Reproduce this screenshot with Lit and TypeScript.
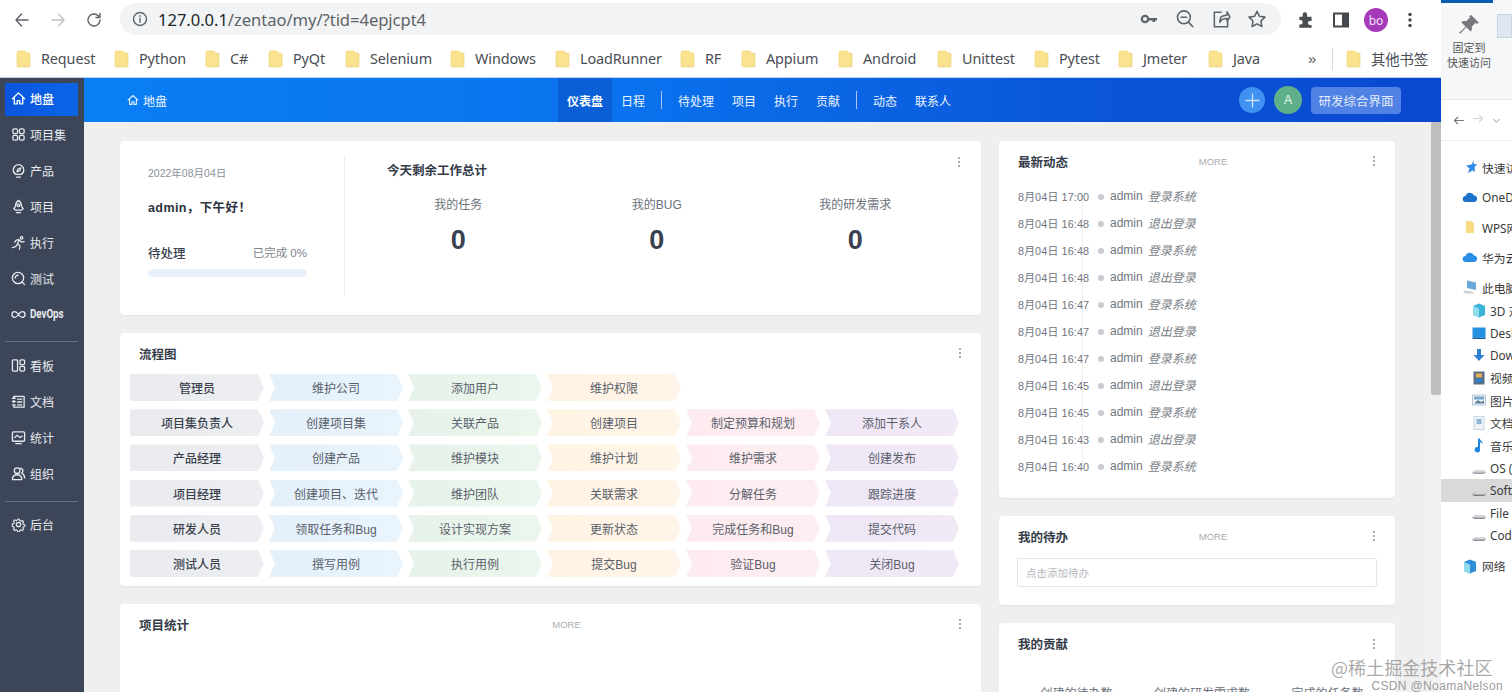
import { LitElement, html, css, svg } from "lit";
import { customElement } from "lit/decorators.js";

const S = (body: unknown, size = 16, box = 16) => html`<svg width=${size} height=${size} viewBox="0 0 ${box} ${box}" fill="none" stroke="currentColor" stroke-width="1.4" stroke-linecap="round" stroke-linejoin="round">${body}</svg>`;

const icons: Record<string, unknown> = {
  home: svg`<path d="M1.5 8.2 8 2l6.5 6.2M3.5 7v6.8h3.2v-3.6h2.6v3.6h3.2V7"/>`,
  grid: svg`<rect x="2" y="2" width="5" height="5" rx="1.4"/><rect x="9" y="2" width="5" height="5" rx="1.4"/><rect x="2" y="9" width="5" height="5" rx="1.4"/><rect x="9" y="9" width="5" height="5" rx="1.4"/>`,
  product: svg`<path d="M5.4 12.2C3.4 11.2 2.4 9.3 2.4 7.4a5.6 5.6 0 0 1 11.2 0c0 1.9-1 3.8-3 4.8z"/><path d="M6 15h4M6.4 9.4l1-3 3-1.2-1 3z"/>`,
  project: svg`<path d="M8 1.5c2.4 1.6 3.2 4 3.2 6.3l1.8 2.4-1.6 1.6H4.6L3 10.2l1.8-2.4C4.8 5.500 5.600 3.100 8 1.500z"/><circle cx="8" cy="6.700" r="1.300"/><path d="M5.800 14.500h4.400"/>`,
  run: svg`<circle cx="11.300" cy="3" r="1.300"/><path d="M1.500 13.500 5 12.500l2-3 2.500 2 -.5 3.500M7 9.500l1.500-4.500-3 .5L4 7.500M8.500 5l2.500 2.500 3-.5"/>`,
  test: svg`<circle cx="7.500" cy="7.500" r="6"/><path d="M4.500 7.500a3 3 0 0 1 3-3M11.800 11.800l2.700 2.700"/>`,
  devops: svg`<path d="M8 8C6.500 5.800 5.500 5 4 5a3 3 0 0 0 0 6c1.500 0 2.500-.8 4-3s2.500-3 4-3a3 3 0 0 1 0 6c-1.500 0-2.500-.8-4-3z"/>`,
  kanban: svg`<rect x="1.500" y="2" width="5.500" height="12" rx="1"/><rect x="9.500" y="2" width="5" height="5" rx="1.200"/><rect x="9.500" y="9" width="5" height="5" rx="1.200"/>`,
  doc: svg`<path d="M3 4V2.500h11v11.500H3v-2M3 7v2"/><path d="M1.500 4.500H4.500M1.500 8H4.500M1.500 11.500H4.500M7 5.500h4.500M7 8.500h4.500M7 11.500h4.500"/>`,
  stat: svg`<rect x="1.500" y="2" width="13" height="10" rx="1.200"/><path d="M4 8l2.500-2.500 3 2.500 2.500-1.500M5 14.500h6"/>`,
  org: svg`<circle cx="6.500" cy="5" r="3"/><path d="M1.500 14.500c0-3.200 2-5.200 5-5.200s5 2 5 5.200zM10 2.200c1.800.3 2.700 1.500 2.700 2.900 0 1.100-.5 2-1.400 2.600 1.800.8 3.200 2.500 3.200 5"/>`,
  gear: svg`<circle cx="8" cy="8" r="2.300"/><path d="M6.800 1.500h2.400l.4 1.900 1.400.6 1.700-1 1.600 1.600-1 1.700.6 1.400 1.900.4v2.400l-1.900.4-.6 1.400 1 1.700-1.600 1.600-1.700-1-1.400.6-.4 1.900H6.800l-.4-1.900-1.400-.6-1.700 1-1.600-1.600 1-1.700-.6-1.400-1.900-.4V7.300l1.900-.4.600-1.400-1-1.700 1.600-1.600 1.700 1 1.400-.6z" transform="translate(1.120 1.120) scale(.86)"/>`,
};

const side1 = [
  ["home", "地盘"], ["grid", "项目集"], ["product", "产品"], ["project", "项目"], ["run", "执行"], ["test", "测试"], ["devops", "DevOps"],
];
const side2 = [["kanban", "看板"], ["doc", "文档"], ["stat", "统计"], ["org", "组织"]];

const marks: [string, number][] = [
  ["Request", 98], ["Python", 91], ["C#", 63], ["PyQt", 77], ["Selenium", 105], ["Windows", 105], ["LoadRunner", 125],
  ["RF", 61], ["Appium", 97], ["Android", 99], ["Unittest", 97], ["Pytest", 84], ["Jmeter", 90], ["Java", 100],
];

const flow = [
  ["管理员", "维护公司", "添加用户", "维护权限"],
  ["项目集负责人", "创建项目集", "关联产品", "创建项目", "制定预算和规划", "添加干系人"],
  ["产品经理", "创建产品", "维护模块", "维护计划", "维护需求", "创建发布"],
  ["项目经理", "创建项目、迭代", "维护团队", "关联需求", "分解任务", "跟踪进度"],
  ["研发人员", "领取任务和Bug", "设计实现方案", "更新状态", "完成任务和Bug", "提交代码"],
  ["测试人员", "撰写用例", "执行用例", "提交Bug", "验证Bug", "关闭Bug"],
];

const acts = [
  ["8月04日 17:00", "登录系统"], ["8月04日 16:48", "退出登录"], ["8月04日 16:48", "登录系统"], ["8月04日 16:48", "退出登录"],
  ["8月04日 16:47", "登录系统"], ["8月04日 16:47", "退出登录"], ["8月04日 16:47", "登录系统"], ["8月04日 16:45", "退出登录"],
  ["8月04日 16:45", "登录系统"], ["8月04日 16:43", "退出登录"], ["8月04日 16:40", "登录系统"],
];

const tree1: [string, string, string][] = [
  ["star", "#2f8fe6", "快速访问"], ["cloud", "#1a73c8", "OneDrive"], ["folder", "#f8dc84", "WPS网盘"], ["cloud", "#2a8ee8", "华为云盘"], ["pc", "#6aa6d6", "此电脑"],
];
const tree2: [string, string, string, boolean?][] = [
  ["cube", "#3cb4d8", "3D 对象"], ["screen", "#2490e0", "Desktop"], ["down", "#2f7fd0", "Downloads"], ["film", "#5b6f86", "视频"],
  ["pic", "#7fa8c8", "图片"], ["page", "#c5d5e2", "文档"], ["note", "#1f86e0", "音乐"], ["drive", "#9aa3ab", "OS (C:)"],
  ["drive", "#7b7f85", "Software (D:)", true], ["drive", "#8b8f95", "File (E:)"], ["drive", "#8b8f95", "Code (F:)"],
];

const treeIcon = (k: string, c: string) => {
  const shapes: Record<string, unknown> = {
    star: svg`<path d="M12 1 9.500 5.500 4 6.500l3.500 3L6 14l4.500-2.500L13 13l-.5-4.500L15 5l-3.500 0z" fill=${c}/>`,
    cloud: svg`<path d="M4 13a3 3 0 0 1-.5-6 4.500 4.500 0 0 1 8.500-.5A3.300 3.300 0 0 1 12.500 13z" fill=${c}/>`,
    folder: svg`<path d="M4 2h5l3 2v10H4z" fill=${c}/>`,
    pc: svg`<path d="M5 1.500 14 3.500V11L5 9z" fill=${c}/><path d="M1 11.500 10 12.500 13 14.500H3z" fill="#c9ced3"/>`,
    cube: svg`<path d="M8 1.500 14 4v9l-6 2.500L2 13V4z" fill=${c}/><path d="M2 4l6 2.500V15.500L2 13z" fill="#8fdcec"/>`,
    screen: svg`<rect x="1.500" y="2.500" width="13" height="10" fill=${c}/><rect x="1.500" y="12.500" width="13" height="1.500" fill="#0f5ea8"/>`,
    down: svg`<path d="M6 2h4v6h3.500L8 14 2.500 8H6z" fill=${c}/>`,
    film: svg`<rect x="2.500" y="1.500" width="11" height="13" fill=${c}/><rect x="5" y="3.500" width="6" height="4" fill="#e8b04c"/><rect x="5" y="8.500" width="6" height="4" fill="#2d7fc9"/>`,
    pic: svg`<rect x="1.500" y="3" width="13" height="10" fill="#eef3f7" stroke="#9fb3c2" stroke-width=".7"/><path d="M3 11.500 7 8l3 2 3-1.500v3z" fill="#5f7f96"/><rect x="3" y="4.500" width="10" height="3" fill=${c}/>`,
    page: svg`<rect x="3" y="1.500" width="10" height="13" fill="#eef2f6" stroke=${c}/><rect x="5.500" y="4" width="5" height="5" fill="#8fb8d8"/>`,
    note: svg`<path d="M7 1.500h1.800c.2 2 2.700 3 3.200 5.500-1-1-2-1.600-3-1.800V12.500a2.700 2.700 0 1 1-2-2.400z" fill=${c}/>`,
    drive: svg`<path d="M1 12.500 5 10h8l2 2.500-2 1.500H3z" fill=${c}/><path d="M5 10h8l2 2.500H1z" fill="#d5d8db"/>`,
  };
  return html`<svg class="ti" width="16" height="16" viewBox="0 0 16 16">${shapes[k]}</svg>`;
};

@customElement("app-root")
export class AppRoot extends LitElement {
  static styles = css`
    :host { display: block; width: 1512px; height: 697px; overflow: hidden; background: #fff;
      font-family: "Liberation Sans", "Noto Sans CJK SC", sans-serif; color: #3c4452; }
    * { box-sizing: border-box; }
    .root { display: flex; height: 697px; }
    .left { width: 1441px; display: flex; flex-direction: column; flex: none; }

    .toolbar { height: 40px; display: flex; align-items: center; color: #5f6368; position: relative; }
    .nav-btn { width: 36px; display: flex; justify-content: center; flex: none; }
    .nav-btns { display: flex; padding-left: 4px; width: 120px; }
    .omni { width: 1161px; height: 32px; margin-top: -2px; border-radius: 16px; background: #f1f3f4; display: flex; align-items: center; padding-left: 12px; flex: none; }
    .url { font: 16.6px "Noto Sans", sans-serif; color: #5f6368; margin-left: 10px; letter-spacing: -.05px; }
    .url b { font-weight: 400; color: #23262b; }
    .omni-right { margin-left: auto; display: flex; gap: 16px; padding-right: 14px; align-items: center; }
    .tools { display: flex; align-items: center; gap: 16px; padding-left: 15px; }
    .avatar { width: 24px; height: 24px; border-radius: 50%; background: #a63ab8; color: #f3e3f5; font: 12px "Noto Sans", sans-serif; display: flex; align-items: center; justify-content: center; margin: 0 -2px; }

    .marks { height: 37px; display: flex; align-items: center; padding-left: 16px; flex: none; }
    .mark { display: flex; align-items: center; gap: 10px; font: 14.4px "Noto Sans", "Noto Sans CJK SC", sans-serif; color: #4a4e54; flex: none; white-space: nowrap; letter-spacing: -.1px; }
    .more { color: #555; font-size: 15px; width: 16px; margin-left: 0; }
    .msep { width: 1px; height: 22px; background: #d8dadd; margin: 0 13px 0 8px; }

    .zen { height: 615px; display: flex; border-top: 1px solid #b8d3f0; overflow: hidden; flex: none; }
    .side { width: 84px; background: #3d4658; flex: none; padding: 5px 6px 0 5px; display: flex; flex-direction: column; }
    .s-item { height: 33px; margin-bottom: 3px; display: flex; align-items: center; gap: 4px; padding: 0 0 3px 6px; color: #e6e9ee; font-size: 12px; flex: none; }
    .s-item.on { background: linear-gradient(90deg, #0b55dc, #0a66e6); color: #fff; font-weight: 500; }
    .s-item.dev span { font: bold 12px "Roboto", sans-serif; transform: scaleX(.82); transform-origin: left; letter-spacing: -.1px; }
    .s-div { height: 1px; background: #667082; flex: none; }
    .d1 { margin: 6px 0 8px; } .d2 { margin: 7px 0 7px; }

    .body { flex: 1; display: flex; flex-direction: column; min-width: 0; position: relative; }
    .head { height: 44px; flex: none; background: linear-gradient(90deg, #0a7ff5, #0a72ee 40%, #0a55d8 75%, #0a48cf); color: #eef4ff; display: flex; align-items: stretch; font-size: 12px; }
    .crumb { width: 474px; padding-left: 43px; display: flex; align-items: center; gap: 4px; flex: none; }
    .hnav { display: flex; align-items: center; }
    .hnav a { height: 44px; display: flex; align-items: center; padding: 0 9px; white-space: nowrap; }
    .hnav a.on { background: #0a5fd6; font-weight: 700; color: #fff; }
    .hsep { width: 1px; height: 18px; background: #a8c6f2; margin: 0 7px; }
    .hright { margin-left: auto; display: flex; align-items: center; padding-right: 40px; gap: 9px; }
    .plus { width: 26px; height: 26px; border-radius: 50%; background: #3f92f2; color: #cfe2fb; display: flex; align-items: center; justify-content: center; }
    .ava { width: 28px; height: 28px; border-radius: 50%; background: #5fb08a; color: #eaf6f0; display: flex; align-items: center; justify-content: center; font-size: 12px; }
    .wbtn { width: 90px; height: 27px; border-radius: 4px; background: #4f82e4; color: #e3ecfb; display: flex; align-items: center; justify-content: center; font-size: 12.5px; margin-left: 0; }

    .main { flex: 1; display: flex; min-height: 0; overflow: hidden; background: #efefef; }
    .content { flex: 1; display: grid; grid-template-columns: 861px 396px; column-gap: 18px; padding: 19px 0 0 36px; overflow: hidden; align-items: start; }
    .col { display: flex; flex-direction: column; gap: 18px; min-width: 0; }
    .scroll { width: 10px; flex: none; background: #f1f1f1; }
    .thumb { height: 273px; background: #bfbfbf; border-radius: 0 0 2px 2px; }

    .card { background: #fff; border-radius: 4px; box-shadow: 0 1px 2px rgba(0,0,0,.06); position: relative; flex: none; }
    .dots { display: flex; flex-direction: column; gap: 2px; width: 2px; }
    .dots i { width: 2px; height: 2px; border-radius: 50%; background: #8e939b; display: block; }
    .c-head { display: flex; align-items: center; height: 40px; padding: 0 20px 0 19px; }
    .c-title { font-size: 12.5px; font-weight: 700; color: #353c49; }
    .more-t { margin-left: auto; font-size: 9.5px; color: #a9adb3; margin-right: 15px; }
    .c-head .dots:last-child { margin-left: auto; }
    .more-t + .dots { margin-left: 0; }

    .today { height: 174px; display: flex; padding: 15px 0 19px; }
    .t-left { width: 225px; border-right: 1px solid #eceef1; padding: 11px 37px 0 28px; flex: none; }
    .t-date { font-size: 10.5px; color: #8b9099; line-height: 13px; }
    .t-hello { font-size: 12.5px; font-weight: 700; color: #2d3440; margin-top: 20px; line-height: 16px; letter-spacing: .4px; }
    .t-row { display: flex; justify-content: space-between; align-items: center; margin-top: 27px; height: 18px; }
    .t-row b { font-weight: 500; font-size: 12.5px; color: #3a414e; }
    .t-row span { font-size: 11.5px; color: #7e838c; }
    .bar { height: 8px; border-radius: 4px; background: #e9f1fb; margin-top: 8px; }
    .t-right { flex: 1; padding: 6px 0 0 42px; position: relative; }
    .t-title { font-size: 12.5px; font-weight: 700; color: #353c49; line-height: 18px; }
    .stats { display: grid; grid-template-columns: repeat(3, 198.500px); margin: 17px 0 0 -28px; text-align: center; }
    .s-l { font-size: 12px; color: #6b717b; line-height: 16px; }
    .s-n { font-size: 27px; font-weight: 700; color: #3a4252; line-height: 32px; margin-top: 11px; }
    .abs-dots { position: absolute; top: 16px; right: 21px; }

    .flow { height: 253px; }
    .rows { padding: 1px 0 0 10px; display: grid; grid-template-columns: repeat(6, 134px); column-gap: 5px; row-gap: 8.200px; }
    .chev { height: 27px; display: flex; align-items: center; justify-content: center; font-size: 12px; color: #59606b;
      clip-path: polygon(0 0, calc(100% - 6px) 0, 100% 50%, calc(100% - 6px) 100%, 0 100%, 6px 50%); }
    .c0 { background: linear-gradient(90deg, #e9ebee, #eceef1); color: #3a414d; font-weight: 500; clip-path: polygon(0 0, calc(100% - 6px) 0, 100% 50%, calc(100% - 6px) 100%, 0 100%); border-radius: 2px 0 0 2px; }
    .c1 { background: linear-gradient(90deg, #e4f0fa, #e9f4fc); }
    .c2 { background: linear-gradient(90deg, #e7f3ea, #ebf6ed); }
    .c3 { background: linear-gradient(90deg, #fff3e3, #fff5e8); }
    .c4 { background: linear-gradient(90deg, #fdebef, #feeef1); }
    .c5 { background: linear-gradient(90deg, #efe7f5, #f2e9f7); }

    .stat-card { height: 200px; }
    .stat-card .c-head, .todo .c-head { }
    .acts { height: 357px; }
    .a-list { padding: 1px 0 0 19px; position: relative; }
    .a-row { display: flex; align-items: center; height: 27px; font-size: 12px; color: #6f757e; position: relative; }
    .a-t { width: 76px; font-size: 10.8px; flex: none; letter-spacing: .15px; white-space: nowrap; padding-top: 1px; }
    .a-dot { width: 6px; height: 6px; border-radius: 50%; background: #c9ccd1; flex: none; margin: 2px 6px 0 4px; position: relative; }
    .a-line { position: absolute; left: 83px; top: 14px; width: 1px; height: 270px; background: #eceef0; }
    .a-u { margin-right: 5px; }
    .a-a { font-style: italic; color: #7a7f88; }

    .todo { height: 89px; }
    .todo input { display: block; width: 360px; height: 29px; margin: 2px 0 0 18px; border: 1px solid #e3e5e8; border-radius: 2px; padding: 0 8px; font: 10.500px "Liberation Sans", "Noto Sans CJK SC", sans-serif; background: #fff; }
    .todo input::placeholder { color: #b4b8be; }
    .contrib { height: 120px; }
    .contrib-h { padding-top: 1px; }
    .c-cols { position: absolute; left: 0; right: 0; top: 61px; display: grid; grid-template-columns: 139px 112px 139px; font-size: 12px; color: #6b717b; text-align: center; padding-left: 8px; }

    .white { flex: 1; background: #fff; }

    .ex { width: 71px; flex: none; overflow: hidden; background: #fff; display: flex; flex-direction: column; border-left: 0; }
    .ribbon { height: 100px; flex: none; background: #f6f7f9; border-bottom: 1px solid #e4e5e7; position: relative; padding-top: 14px; display: flex; }
    .strip { position: absolute; left: 0; top: 0; height: 3px; width: 52px; background: #0b5cad; }
    .pin { width: 56px; flex: none; display: flex; flex-direction: column; align-items: center; font-size: 11px; line-height: 15px; color: #555; text-align: center; }
    .pin svg { margin-bottom: 5px; }
    .copy { width: 15px; height: 24px; background: #dfe8f2; border: 1px solid #c7d4e2; flex: none; }
    .ex-nav { height: 41px; flex: none; border-bottom: 1px solid #eceded; display: flex; align-items: center; gap: 7px; padding-left: 11px; color: #777; }
    .ex-nav .dim { color: #d4d4d4; }
    .tree { padding-top: 11px; font: 11.800px "Noto Sans", "Noto Sans CJK SC", sans-serif; color: #3a3a3a; }
    .t1 { height: 30px; display: flex; align-items: center; gap: 4px; padding-left: 21px; white-space: nowrap; }
    .subs { margin-top: -3px; }
    .t2 { height: 22.500px; display: flex; align-items: center; gap: 3px; padding-left: 30px; white-space: nowrap; }
    .t2.sel { background: #d9d9d9; }
    .last { margin-top: 4px; }
    .ti { flex: none; }

    .wm { position: absolute; left: 1331px; top: 655px; pointer-events: none; text-align: right; width: 172px; color: rgba(130,130,130,.8); }
    .wm1 { font: 18px/24px "Noto Sans CJK SC", sans-serif; letter-spacing: .05px; text-align: left; color: rgba(140,140,140,.75); }
    .wm2 { font: 12px/15px "Liberation Sans", sans-serif; letter-spacing: .35px; }
  `;

  private dots() { return html`<span class="dots"><i></i><i></i><i></i></span>`; }

  private folder() {
    return html`<svg width="15" height="18" viewBox="0 0 15 18"><path d="M1 2.500A1.500 1.500 0 0 1 2.500 1H9l1.500 2H13a1 1 0 0 1 1 1v12a1 1 0 0 1-1 1H2a1 1 0 0 1-1-1z" fill="#fbe28f" stroke="#efd06f" stroke-width=".6"/></svg>`;
  }

  render() {
    return html`<div class="root">
      <div class="left">
        <div class="toolbar">
          <div class="nav-btns">
            <span class="nav-btn">${S(svg`<path d="M15 9H3M8.500 3 3 9l5.500 6"/>`, 18, 18)}</span>
            <span class="nav-btn" style="color:#c0c3c7">${S(svg`<path d="M3 9h12M9.500 3 15 9l-5.500 6"/>`, 18, 18)}</span>
            <span class="nav-btn">${S(svg`<path d="M15 9a6 6 0 1 1-1.800-4.300L15 6.500M15 2.500v4h-4"/>`, 18, 18)}</span>
          </div>
          <div class="omni">
            ${S(svg`<circle cx="8" cy="8" r="6.500"/><path d="M8 7.300v4M8 4.600v.6"/>`, 16)}
            <span class="url"><b>127.0.0.1</b>/zentao/my/?tid=4epjcpt4</span>
            <div class="omni-right">
              <svg width="20" height="18" viewBox="0 0 20 18"><circle cx="6" cy="9" r="3.200" fill="none" stroke="#5f6368" stroke-width="2.200"/><path d="M9 8h9v2.500h-2V12h-2.500v-1.500H9z" fill="#5f6368"/></svg>
              ${S(svg`<circle cx="8" cy="7.500" r="5.800"/><path d="M12.200 11.800 16 16M5.500 7.500h5"/>`, 20, 18)}
              ${S(svg`<path d="M9 3H3v13h12v-5M10 6.500c3-.5 4.500-1 4.500-1V2.500L17 7l-2.500 4V8.500C11 8.500 9 9.500 8 12c0-3 .5-5 2-5.500z"/>`, 20, 18)}
              ${S(svg`<path d="M9 2l2.200 4.600 5 .7-3.600 3.500.8 5L9 13.400 4.600 15.800l.8-5L1.800 7.300l5-.7z"/>`, 20, 18)}
            </div>
          </div>
          <div class="tools">
            <svg width="20" height="20" viewBox="0 0 18 18"><path d="M3 6h3V4a2 2 0 0 1 4 0v2h4v4h-1.500a1.800 1.800 0 0 0 0 3.600H14V16H3v-3h1a2 2 0 0 0 0-4H3z" fill="#4a4d52"/></svg>
            <svg width="18" height="18" viewBox="0 0 18 18"><rect x="2" y="2.500" width="14" height="13" fill="none" stroke="#45484d" stroke-width="2"/><rect x="10" y="2.500" width="6" height="13" fill="#45484d"/></svg>
            <span class="avatar">bo</span>
            <svg width="16" height="18" viewBox="0 0 16 18"><circle cx="8" cy="3.500" r="1.700" fill="#45484d"/><circle cx="8" cy="9" r="1.700" fill="#45484d"/><circle cx="8" cy="14.500" r="1.700" fill="#45484d"/></svg>
          </div>
        </div>
        <div class="marks">
          ${marks.map(([n, w]) => html`<span class="mark" style="width:${w}px">${this.folder()}${n}</span>`)}
          <span class="more">»</span>
          <span class="msep"></span>
          <span class="mark">${this.folder()}其他书签</span>
        </div>
        <div class="zen">
          <nav class="side">
            ${side1.map(([i, t], n) => html`<div class="s-item ${n === 0 ? "on" : ""} ${i === "devops" ? "dev" : ""}">${S(icons[i], 15)}<span>${t}</span></div>`)}
            <div class="s-div d1"></div>
            ${side2.map(([i, t]) => html`<div class="s-item">${S(icons[i], 15)}<span>${t}</span></div>`)}
            <div class="s-div d2"></div>
            <div class="s-item">${S(icons.gear, 15)}<span>后台</span></div>
          </nav>
          <div class="body">
            <header class="head">
              <div class="crumb">${S(icons.home, 12)}<span>地盘</span></div>
              <div class="hnav">
                <a class="on">仪表盘</a><a>日程</a><span class="hsep"></span>
                <a>待处理</a><a>项目</a><a>执行</a><a>贡献</a><span class="hsep"></span>
                <a>动态</a><a>联系人</a>
              </div>
              <div class="hright">
                <span class="plus">${S(svg`<path d="M8 1v14M1 8h14"/>`, 15)}</span>
                <span class="ava">A</span>
                <span class="wbtn">研发综合界面</span>
              </div>
            </header>
            <div class="main">
              <div class="content">
                <div class="col">
                  <section class="card today">
                    <div class="t-left">
                      <div class="t-date">2022年08月04日</div>
                      <div class="t-hello">admin，下午好！</div>
                      <div class="t-row"><b>待处理</b><span>已完成 0%</span></div>
                      <div class="bar"></div>
                    </div>
                    <div class="t-right">
                      <div class="t-title">今天剩余工作总计</div>
                      <div class="stats">
                        ${["我的任务", "我的BUG", "我的研发需求"].map((l) => html`<div><div class="s-l">${l}</div><div class="s-n">0</div></div>`)}
                      </div>
                    </div>
                    <span class="abs-dots">${this.dots()}</span>
                  </section>
                  <section class="card flow">
                    <div class="c-head"><span class="c-title">流程图</span>${this.dots()}</div>
                    <div class="rows">
                      ${flow.map((r) => [0, 1, 2, 3, 4, 5].map((i) => r[i]
                        ? html`<div class="chev c${i}">${r[i]}</div>`
                        : html`<div></div>`))}
                    </div>
                  </section>
                  <section class="card stat-card">
                    <div class="c-head"><span class="c-title">项目统计</span><span class="more-t">MORE</span>${this.dots()}</div>
                  </section>
                </div>
                <div class="col">
                  <section class="card acts">
                    <div class="c-head"><span class="c-title">最新动态</span><span class="more-t">MORE</span>${this.dots()}</div>
                    <div class="a-list">
                      <span class="a-line"></span>
                      ${acts.map(([t, a]) => html`<div class="a-row"><span class="a-t">${t}</span><span class="a-dot"></span><span class="a-u">admin</span><span class="a-a">${a}</span></div>`)}
                    </div>
                  </section>
                  <section class="card todo">
                    <div class="c-head"><span class="c-title">我的待办</span><span class="more-t">MORE</span>${this.dots()}</div>
                    <input placeholder="点击添加待办" />
                  </section>
                  <section class="card contrib">
                    <div class="c-head contrib-h"><span class="c-title">我的贡献</span>${this.dots()}</div>
                    <div class="c-cols"><span>创建的待办数</span><span>创建的研发需求数</span><span>完成的任务数</span></div>
                  </section>
                </div>
              </div>
              <div class="scroll"><div class="thumb"></div></div>
            </div>
          </div>
        </div>
        <div class="white"></div>
      </div>
      <aside class="ex">
        <div class="ribbon">
          <span class="strip"></span>
          <div class="pin">
            <svg width="22" height="22" viewBox="0 0 20 20"><path d="M12 1l7 7-2 1-1-1-3.500 3.500c.5 2 0 3.500-1 4.500L7.500 12 2 18l-1-1 6-5.500-4-4c1-1 2.500-1.500 4.500-1L11 3l-1-1z" fill="#77797d"/></svg>
            <span>固定到</span><span>快速访问</span>
          </div>
          <span class="copy"></span>
        </div>
        <div class="ex-nav">
          ${S(svg`<path d="M14 8H3M7 4 3 8l4 4"/>`, 13)}
          <span class="dim">${S(svg`<path d="M2 8h11M9 4l4 4-4 4"/>`, 13)}</span>
          ${S(svg`<path d="M3 6l5 5 5-5"/>`, 9)}
        </div>
        <div class="tree">
          ${tree1.map(([k, c, t]) => html`<div class="t1">${treeIcon(k, c)}<span>${t}</span></div>`)}
          <div class="subs">
            ${tree2.map(([k, c, t, sel]) => html`<div class="t2 ${sel ? "sel" : ""}">${treeIcon(k, c)}<span>${t}</span></div>`)}
          </div>
          <div class="t1 last">${treeIcon("cube", "#2f8fd8")}<span>网络</span></div>
        </div>
      </aside>
      <div class="wm"><div class="wm1">@稀土掘金技术社区</div><div class="wm2">CSDN @NoamaNelson</div></div>
    </div>`;
  }
}
